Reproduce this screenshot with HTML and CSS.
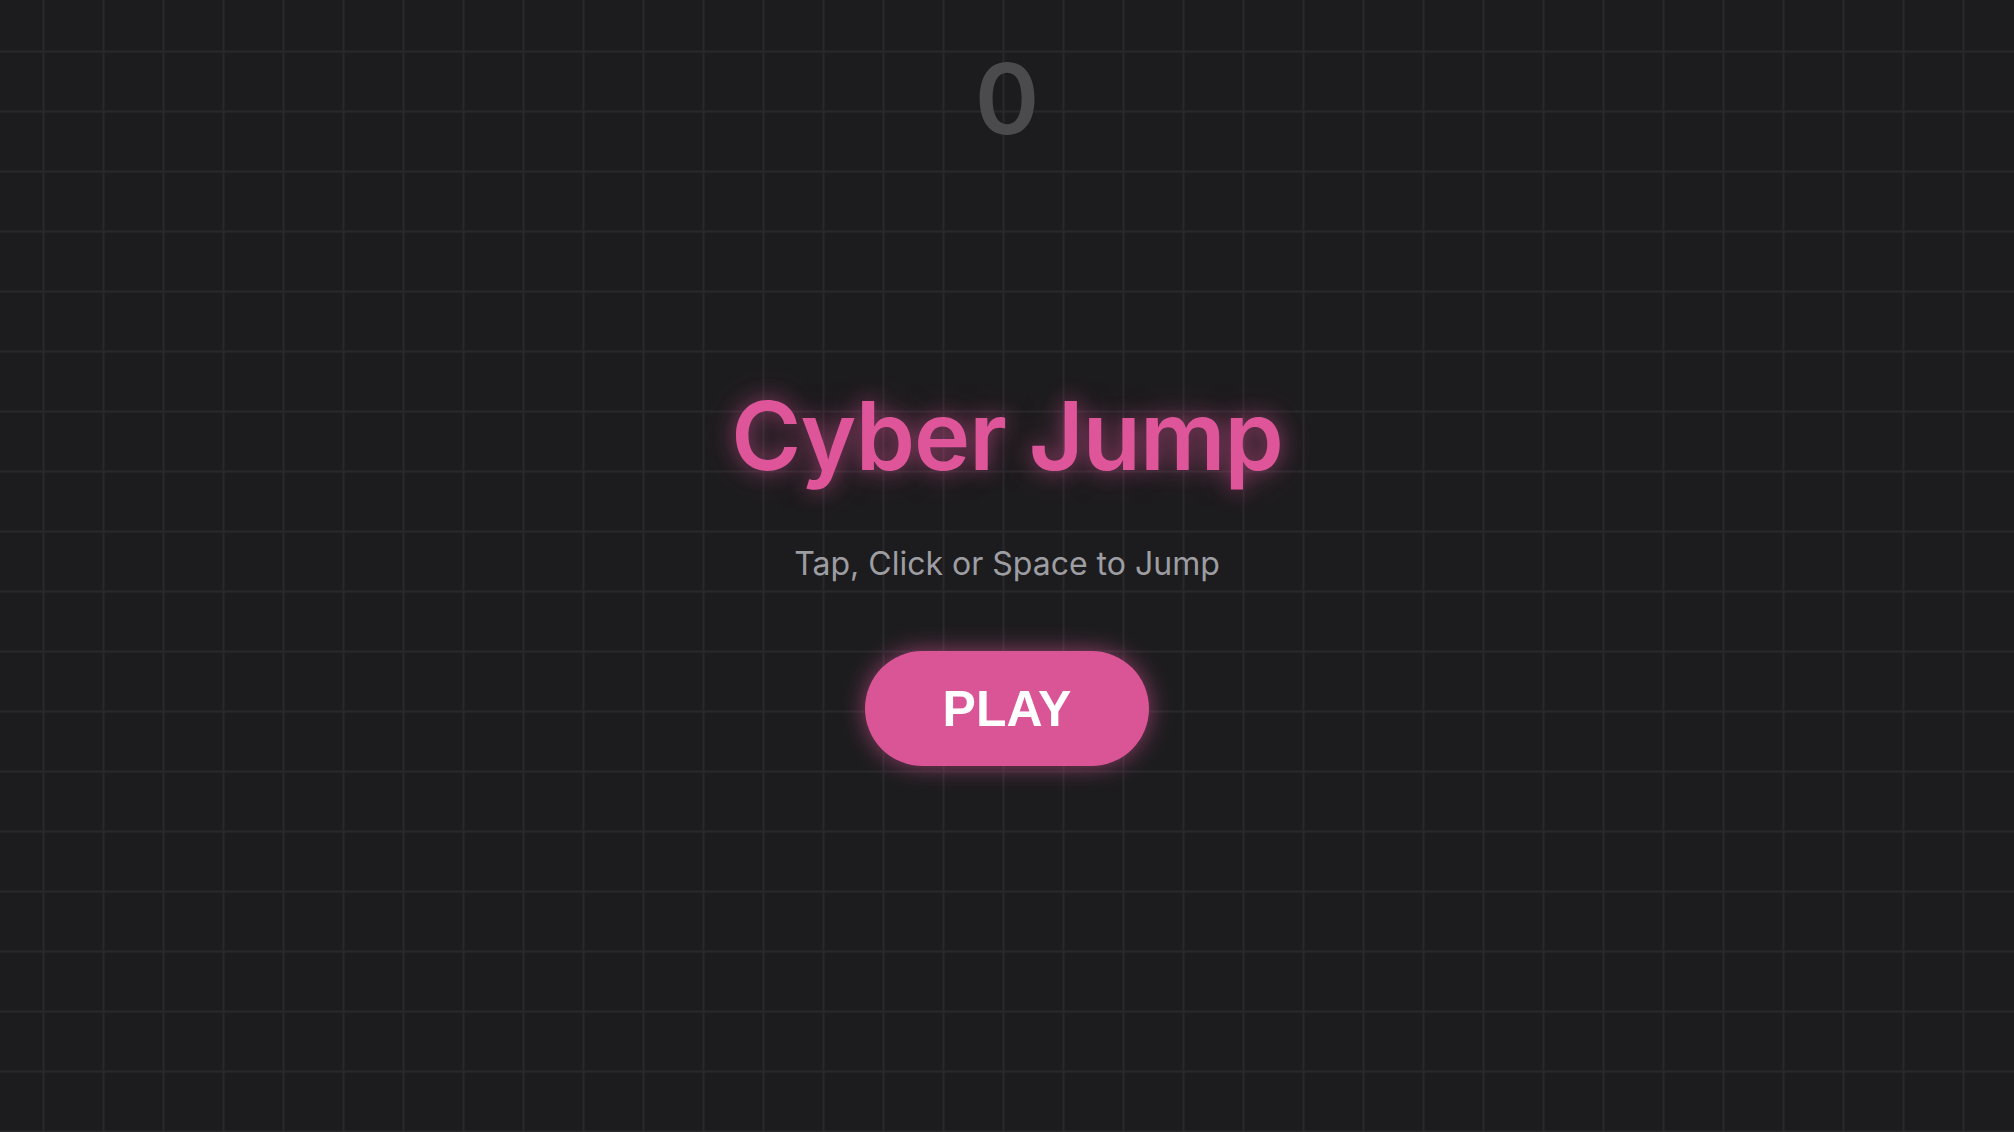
FILE: index.html
```html
<!DOCTYPE html>
<html lang="en">
<head>
  <meta charset="UTF-8">
  <meta name="viewport" content="width=device-width, initial-scale=1.0">
  <title>Cyber Jump</title>
  <link rel="stylesheet" href="styles.css">
</head>
<body>

  <div class="game" id="game">
    <div class="score" id="score">0</div>

    <div class="menu" id="menu">
      <h1 class="title">Cyber Jump</h1>
      <p class="hint">Tap, Click or Space to Jump</p>
      <button class="play-btn" id="play-btn">PLAY</button>
    </div>
  </div>

</body>
</html>
```

FILE: styles.css
```css
body {
  margin: 0;
  height: 100vh;
  overflow: hidden;
  font-family: Inter, "Liberation Sans", Arial, sans-serif;
  background-color: #1c1c1e;
  /* faint grid behind the game */
  background-image:
    linear-gradient(to right, transparent 0, #28282b 1px, #29292c 2px, transparent 3px),
    linear-gradient(to bottom, transparent 0, #28282b 1px, #29292c 2px, transparent 3px);
  background-size: 60px 60px;
  background-position: 42px 50px;
}

.game {
  display: flex;
  flex-direction: column;
  align-items: center;
}

.score {
  margin-top: 50px;
  font-size: 98px;
  font-weight: 600;
  line-height: 1;
  color: #4b4b4e;
}

.menu {
  display: flex;
  flex-direction: column;
  align-items: center;
  margin-top: 240px;
}

.title {
  margin: 0;
  font-size: 95px;
  font-weight: 600;
  line-height: 1;
  letter-spacing: -1px;
  color: #de5699;
  text-shadow: 0 0 20px rgba(222, 86, 153, 0.5), 0 0 40px rgba(222, 86, 153, 0.3);
}

.hint {
  margin: 65px 0 0;
  font-size: 32px;
  line-height: 1;
  color: #9d9da2;
}

.play-btn {
  display: flex;
  align-items: center;
  justify-content: center;
  margin-top: 71px;
  width: 284px;
  height: 115px;
  padding: 0;
  border: none;
  border-radius: 58px;
  font-family: "Liberation Sans", Arial, sans-serif;
  font-size: 50px;
  font-weight: bold;
  line-height: 1;
  color: #fff;
  background-color: #da5596;
  box-shadow: 0 0 24px rgba(222, 86, 153, 0.6);
  cursor: pointer;
}
```
